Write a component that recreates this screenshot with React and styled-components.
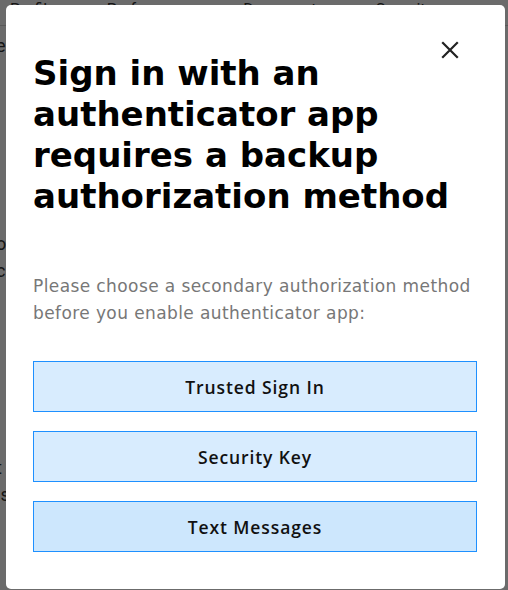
import styled, { createGlobalStyle } from "styled-components";

const GlobalStyle = createGlobalStyle`
  html, body {
    margin: 0;
    padding: 0;
    background: #ffffff;
  }
  body {
    font-family: "DejaVu Sans", "Noto Sans", sans-serif;
  }
`;

const Page = styled.div`
  position: relative;
  width: 508px;
  height: 590px;
  overflow: hidden;
  background: #ffffff;
`;

const Tabs = styled.div`
  display: flex;
  gap: 51px;
  padding: 0 10px 6px;
  margin-top: -14px;
  height: 40px;
  box-sizing: border-box;
  align-items: flex-end;
  border-bottom: 1px solid #d4d4d4;
  font-family: "Roboto", sans-serif;
  font-size: 16px;
  color: #333;
`;

const PageText = styled.div`
  padding-top: 6px;
  margin-left: -4px;
  font-family: "Roboto", sans-serif;
  font-size: 18px;
  line-height: 27px;
  color: #333;
`;

const Letter = styled.div`
  color: ${(p) => (p.$link ? "#2a6fc9" : "#333")};
  margin-top: ${(p) => p.$skip || 0}px;
`;

const Backdrop = styled.div`
  position: absolute;
  inset: 0;
  background: rgba(0, 0, 0, 0.58);
`;

const Modal = styled.div`
  position: absolute;
  left: 6px;
  top: 5px;
  width: 499px;
  height: 584px;
  box-sizing: border-box;
  background: #ffffff;
  border-radius: 5px;
  padding: 48px 28px 37px 27px;
  display: flex;
  flex-direction: column;
  font-family: "DejaVu Sans", sans-serif;
`;

const CloseButton = styled.button`
  position: absolute;
  top: 34px;
  right: 44px;
  width: 22px;
  height: 22px;
  padding: 0;
  border: none;
  background: none;
  cursor: pointer;
  display: flex;
  align-items: center;
  justify-content: center;
`;

const Title = styled.h1`
  margin: 0;
  font-size: 34px;
  line-height: 41px;
  font-weight: 700;
  color: #000;
`;

const Description = styled.p`
  margin: 56px 0 0 0;
  font-size: 17px;
  letter-spacing: 0.4px;
  line-height: 27px;
  color: #777;
`;

const Options = styled.div`
  margin-top: 34px;
  display: flex;
  flex-direction: column;
  gap: 19px;
`;

const OptionButton = styled.button`
  height: 51px;
  width: 100%;
  border: 1px solid #1e90ff;
  background: ${(p) => (p.$hover ? "#cde7fd" : "#d8ecfe")};
  font-family: "Open Sans", sans-serif;
  font-size: 17.5px;
  font-weight: 600;
  letter-spacing: 0.9px;
  color: #111;
  cursor: pointer;
`;

const options = ["Trusted Sign In", "Security Key", "Text Messages"];

export default function App() {
  return (
    <Page>
      <GlobalStyle />
      <Tabs>
        <span>Profile</span>
        <span>Preferences</span>
        <span>Documents</span>
        <span>Security</span>
      </Tabs>
      <PageText>
        <Letter>e</Letter>
        <Letter $link>i</Letter>
        <Letter $skip={144}>o</Letter>
        <Letter>c</Letter>
        <Letter $skip={170}>t</Letter>
        <Letter>is</Letter>
      </PageText>
      <Backdrop />
      <Modal>
        <CloseButton aria-label="Close">
          <svg width="18" height="18" viewBox="0 0 18 18">
            <path d="M2 2 L16 16 M16 2 L2 16" stroke="#222" strokeWidth="2.2" strokeLinecap="square" />
          </svg>
        </CloseButton>
        <Title>Sign in with an authenticator app requires a backup authorization method</Title>
        <Description>
          Please choose a secondary authorization method before you enable authenticator app:
        </Description>
        <Options>
          {options.map((o, i) => (
            <OptionButton key={o} $hover={i === 2}>
              {o}
            </OptionButton>
          ))}
        </Options>
      </Modal>
    </Page>
  );
}
